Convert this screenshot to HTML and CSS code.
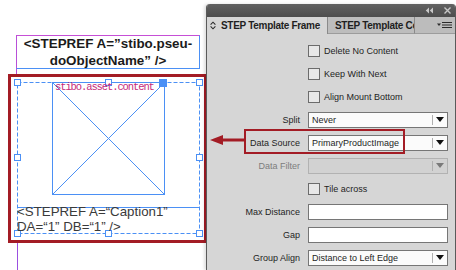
FILE: index.html
```html
<!DOCTYPE html>
<html lang="en">
<head>
<meta charset="utf-8">
<title>STEP Template Frame</title>
<link rel="stylesheet" href="styles.css">
</head>
<body>
<div class="screen">
  <div class="canvas">
    <svg class="art" width="206" height="270" viewBox="0 0 206 270">
      <line x1="16.5" y1="35" x2="16.5" y2="74" stroke="#b84fd8"/>
      <line x1="17.5" y1="243" x2="17.5" y2="270" stroke="#9b4fe0"/>
      <g stroke="#4b90f5" fill="none">
        <rect x="17.5" y="82.5" width="182" height="151" stroke-dasharray="4 2"/>
        <rect x="52.5" y="82.5" width="112" height="112"/>
        <line x1="52.5" y1="82.5" x2="164.5" y2="194.5"/>
        <line x1="164.5" y1="82.5" x2="52.5" y2="194.5"/>
        <line x1="17" y1="207.5" x2="200" y2="207.5"/>
      </g>
      <g stroke="#4b90f5" fill="#fff">
        <rect x="14.5" y="79.5" width="6" height="6"/>
        <rect x="105.5" y="79.5" width="6" height="6"/>
        <rect x="196.5" y="79.5" width="6" height="6"/>
        <rect x="14.5" y="154.5" width="6" height="6"/>
        <rect x="196.5" y="154.5" width="6" height="6"/>
        <rect x="14.5" y="230.5" width="6" height="6"/>
        <rect x="105.5" y="230.5" width="6" height="6"/>
        <rect x="196.5" y="230.5" width="6" height="6"/>
        <rect x="159.5" y="79.5" width="7" height="7" fill="#4b90f5"/>
      </g>
    </svg>
    <div class="textframe">&lt;STEPREF A=”stibo.pseu-<br>doObjectName” /&gt;</div>
    <div class="asset-label">stibo.asset.content</div>
    <div class="caption">&lt;STEPREF A=“Caption1”<br>DA=“1” DB=“1” /&gt;</div>
    <div class="callout-frame"></div>
  </div>

  <div class="panel">
    <div class="titlebar">
      <svg class="tb-icons" width="26" height="7" viewBox="0 0 26 7">
        <path d="M4 0.5 L0.8 3.5 L4 6.5 Z M8 0.5 L4.8 3.5 L8 6.5 Z" fill="#c8c8c8"/>
        <path d="M19.5 0.5 L25.5 6.5 M25.5 0.5 L19.5 6.5" stroke="#c8c8c8" stroke-width="1.4"/>
      </svg>
    </div>
    <div class="tabs">
      <div class="tab tab-active">
        <svg class="tab-grip" width="6" height="9" viewBox="0 0 6 9">
          <path d="M0.6 3.6 L3 1.2 L5.4 3.6 M0.6 5.4 L3 7.8 L5.4 5.4" fill="none" stroke="#2b2b2b" stroke-width="1.1"/>
        </svg>
        <span>STEP Template Frame</span>
      </div>
      <div class="tab tab-inactive"><span>STEP Template Content</span></div>
      <div class="tab-menu">
        <svg width="15" height="8" viewBox="0 0 15 8">
          <path d="M0 2.5 L4 2.5 L2 5 Z" fill="#2b2b2b"/>
          <path d="M5 1.5 H15 M5 4 H15 M5 6.5 H15" stroke="#2b2b2b" stroke-width="1.1"/>
        </svg>
      </div>
    </div>

    <div class="form">
      <div class="row">
        <span class="label"></span>
        <label class="check"><span class="box"></span>Delete No Content</label>
      </div>
      <div class="row">
        <span class="label"></span>
        <label class="check"><span class="box"></span>Keep With Next</label>
      </div>
      <div class="row">
        <span class="label"></span>
        <label class="check"><span class="box"></span>Align Mount Bottom</label>
      </div>
      <div class="row">
        <span class="label">Split</span>
        <div class="select"><span class="value">Never</span><span class="dd"><span class="tri"></span></span></div>
      </div>
      <div class="row row-callout">
        <span class="label">Data Source</span>
        <div class="select"><span class="value">PrimaryProductImage</span><span class="dd"><span class="tri"></span></span></div>
        <div class="callout-box"></div>
        <svg class="callout-arrow" width="35" height="10" viewBox="0 0 35 10">
          <path d="M0 5 L13 0 L13 3.5 L35 3.5 L35 6.5 L13 6.5 L13 10 Z" fill="#a31c25"/>
        </svg>
      </div>
      <div class="row">
        <span class="label label-disabled">Data Filter</span>
        <div class="select select-disabled"><span class="value"></span><span class="dd"><span class="tri"></span></span></div>
      </div>
      <div class="row">
        <span class="label"></span>
        <label class="check"><span class="box"></span>Tile across</label>
      </div>
      <div class="row">
        <span class="label">Max Distance</span>
        <div class="input"></div>
      </div>
      <div class="row">
        <span class="label">Gap</span>
        <div class="input"></div>
      </div>
      <div class="row">
        <span class="label">Group Align</span>
        <div class="select"><span class="value">Distance to Left Edge</span><span class="dd"><span class="tri"></span></span></div>
      </div>
    </div>
  </div>
</div>
</body>
</html>
```

FILE: styles.css
```css
* { box-sizing: border-box; }

html, body {
  margin: 0;
  padding: 0;
  background: #ffffff;
}

body {
  width: 456px;
  height: 270px;
  overflow: hidden;
  font-family: "Liberation Sans", Arial, sans-serif;
}

.screen {
  display: flex;
  width: 456px;
  height: 270px;
}

/* ---------- layout canvas ---------- */
.canvas {
  position: relative;
  flex: none;
  width: 206px;
  height: 270px;
  background: #ffffff;
}

.art {
  position: absolute;
  left: 0;
  top: 0;
}

.textframe {
  position: absolute;
  left: 16px;
  top: 35px;
  width: 184px;
  height: 34px;
  border-top: 1px solid #c64fd6;
  border-left: 1px solid #b84fd8;
  border-right: 1px solid #4b90f5;
  border-bottom: 1px solid #4b90f5;
  text-align: center;
  font-weight: bold;
  font-size: 13.4px;
  line-height: 16.5px;
  color: #1b1b1b;
}

.asset-label {
  position: absolute;
  left: 55px;
  top: 82px;
  font-family: "Liberation Mono", monospace;
  font-size: 10.5px;
  letter-spacing: -1.1px;
  line-height: 11px;
  color: #c42a7c;
}

.caption {
  position: absolute;
  left: 17px;
  top: 204px;
  font-size: 13.3px;
  line-height: 15px;
  color: #3a3a3a;
  white-space: nowrap;
}

.callout-frame {
  position: absolute;
  left: 8px;
  top: 74px;
  width: 199px;
  height: 169px;
  border: 3px solid #a31c25;
}

/* ---------- panel ---------- */
.panel {
  flex: none;
  width: 250px;
  height: 266px;
  margin-top: 4px;
  background: #d6d6d6;
  border-left: 1px solid #5a5a5a;
  border-right: 1px solid #5a5a5a;
  border-top-left-radius: 4px;
  border-top-right-radius: 4px;
  overflow: hidden;
  box-shadow: -2px 0 3px rgba(0, 0, 0, 0.12);
  position: relative;
  z-index: 1;
}

.titlebar {
  height: 13px;
  background: linear-gradient(#626262, #4d4d4d);
  display: flex;
  justify-content: flex-end;
  align-items: center;
  padding-right: 4px;
}

.tabs {
  display: flex;
  height: 17px;
  background: #bcbcbc;
}

.tab {
  display: flex;
  align-items: center;
  font-size: 10px;
  font-weight: bold;
  letter-spacing: -0.3px;
  color: #1f1f1f;
  white-space: nowrap;
  overflow: hidden;
}

.tab-active {
  width: 121px;
  background: #d6d6d6;
  border-right: 1px solid #8a8a8a;
  padding-left: 3px;
  gap: 5px;
}

.tab-inactive {
  width: 87px;
  background: #bdbdbd;
  border-right: 1px solid #8a8a8a;
  border-bottom: 1px solid #9c9c9c;
  padding-left: 7px;
}

.tab-menu {
  flex: 1;
  display: flex;
  align-items: center;
  justify-content: flex-end;
  padding-right: 3px;
  border-bottom: 1px solid #9c9c9c;
}

.form {
  padding-top: 5px;
}

.row {
  display: grid;
  grid-template-columns: 93px 140px;
  column-gap: 8px;
  height: 23px;
  align-items: center;
  font-size: 9px;
  color: #1e1e1e;
  position: relative;
}

.label {
  text-align: right;
  white-space: nowrap;
}

.label-disabled {
  color: #7d7d7d;
}

.check {
  display: flex;
  align-items: center;
  gap: 4px;
  white-space: nowrap;
}

.box {
  width: 12px;
  height: 12px;
  border: 1px solid #6c6c6c;
  background: #e8e8e8;
}

.select {
  display: flex;
  align-items: center;
  height: 16px;
  border: 1px solid #767676;
  background: #fbfbfb;
}

.select .value {
  flex: 1;
  padding-left: 3px;
  white-space: nowrap;
  overflow: hidden;
}

.select .dd {
  width: 15px;
  height: 10px;
  border-left: 1px solid #b0b0b0;
  display: flex;
  align-items: center;
  justify-content: center;
}

.tri {
  width: 0;
  height: 0;
  border-left: 4px solid transparent;
  border-right: 4px solid transparent;
  border-top: 5px solid #111;
}

.select-disabled {
  background: #d2d2d2;
  border-color: #b2b2b2;
}

.select-disabled .tri {
  border-top-color: #7a7a7a;
}

.input {
  height: 16px;
  border: 1px solid #767676;
  background: #ffffff;
}

.callout-box {
  position: absolute;
  left: 37px;
  top: -2px;
  width: 161px;
  height: 25px;
  border: 2.5px solid #a31c25;
}

.callout-arrow {
  position: absolute;
  left: 3px;
  top: 4px;
}
```
